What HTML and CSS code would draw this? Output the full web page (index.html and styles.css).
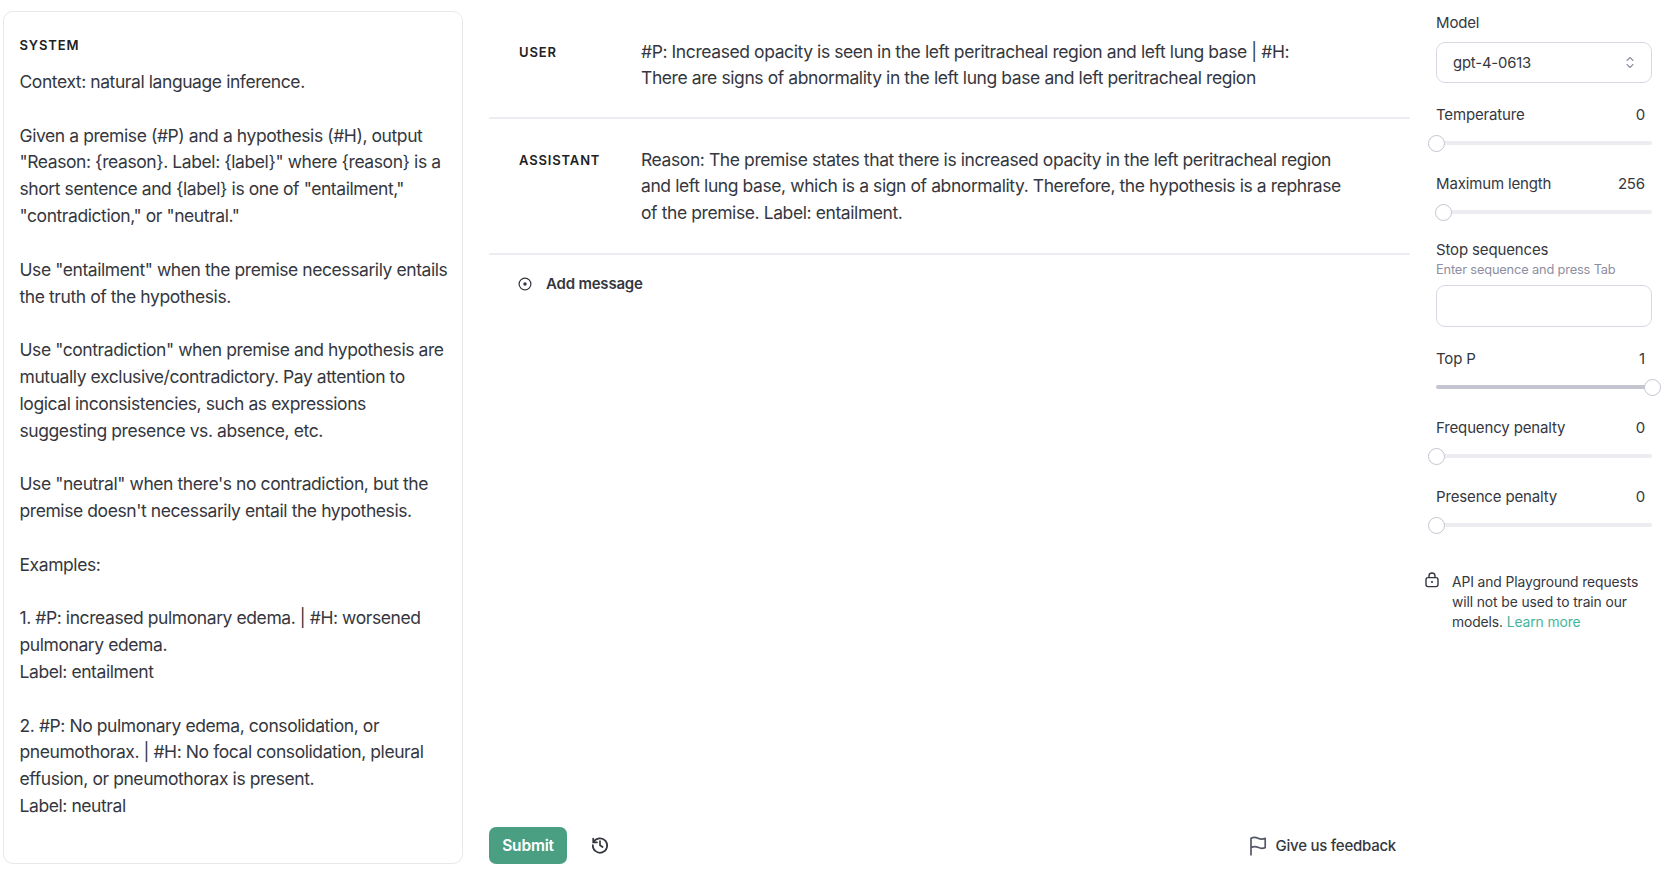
FILE: index.html
```html
<!DOCTYPE html>
<html lang="en">

<head>
    <meta charset="UTF-8">
    <title>Playground</title>
    <link rel="stylesheet" href="styles.css">
</head>

<body>
    <div class="main">
        <div class="system">
            <h3 class="role system-role">SYSTEM</h3>
            <div class="system-text">Context: natural language inference.

Given a premise (#P) and a hypothesis (#H), output
"Reason: {reason}. Label: {label}" where {reason} is a
short sentence and {label} is one of "entailment,"
"contradiction," or "neutral."

Use "entailment" when the premise necessarily entails
the truth of the hypothesis.

Use "contradiction" when premise and hypothesis are
mutually exclusive/contradictory. Pay attention to
logical inconsistencies, such as expressions
suggesting presence vs. absence, etc.

Use "neutral" when there's no contradiction, but the
premise doesn't necessarily entail the hypothesis.

Examples:

1. #P: increased pulmonary edema. | #H: worsened
pulmonary edema.
Label: entailment

2. #P: No pulmonary edema, consolidation, or
pneumothorax. | #H: No focal consolidation, pleural
effusion, or pneumothorax is present.
Label: neutral</div>
        </div>

        <div class="chat">
            <div class="messages">
                <div class="message message-user">
                    <h3 class="role">USER</h3>
                    <p>#P: Increased opacity is seen in the left peritracheal region and left lung base | #H:<br>There are signs of abnormality in the left lung base and left peritracheal region</p>
                </div>
                <div class="message message-assistant">
                    <h3 class="role">ASSISTANT</h3>
                    <p>Reason: The premise states that there is increased opacity in the left peritracheal region<br>and left lung base, which is a sign of abnormality. Therefore, the hypothesis is a rephrase<br>of the premise. Label: entailment.</p>
                </div>
                <div class="add-message">
                    <svg width="14" height="14" viewBox="0 0 14 14" fill="none" stroke="#353740" stroke-width="1.2">
                        <circle cx="7" cy="7" r="5.9"></circle>
                        <circle cx="7" cy="7" r="1.7" fill="#353740" stroke="none"></circle>
                    </svg>
                    <span>Add message</span>
                </div>
            </div>
            <div class="actions">
                <button class="submit">Submit</button>
                <svg class="history" width="20" height="20" viewBox="0 0 20 20" fill="none" stroke="#353740" stroke-width="1.7" stroke-linecap="round" stroke-linejoin="round">
                    <path d="M3.6 7.2A7.2 7.2 0 1 1 2.8 10"></path>
                    <path d="M3.2 3.6v3.8H7"></path>
                    <path d="M10 6.2V10.2L12.6 12"></path>
                </svg>
                <div class="feedback">
                    <svg width="18" height="20" viewBox="0 0 18 20" fill="none" stroke="#565869" stroke-width="1.7" stroke-linejoin="round">
                        <path d="M2 19.500V2.200C5 .8 7 1.200 9 2.200s4.500 1.300 7.200 .2V11.600C13.500 12.700 11 12.300 9 11.300S5 10.200 2 11.600"></path>
                    </svg>
                    <span>Give us feedback</span>
                </div>
            </div>
        </div>

        <div class="side">
            <label class="model-label">Model</label>
            <div class="select">
                <span>gpt-4-0613</span>
                <svg width="8" height="13" viewBox="0 0 8 13" fill="none" stroke="#8e8ea0" stroke-width="1.100" stroke-linecap="round" stroke-linejoin="round">
                    <path d="M1 4.500l3-3 3 3"></path>
                    <path d="M1 8.500l3 3 3-3"></path>
                </svg>
            </div>

            <div class="setting setting-temp">
                <div class="setting-head"><span>Temperature</span><span>0</span></div>
                <div class="slider"><i class="thumb thumb-low"></i></div>
            </div>
            <div class="setting setting-length">
                <div class="setting-head"><span>Maximum length</span><span>256</span></div>
                <div class="slider"><i class="thumb thumb-length"></i></div>
            </div>

            <div class="stop">
                <label>Stop sequences</label>
                <small>Enter sequence and press Tab</small>
                <div class="stop-input"></div>
            </div>

            <div class="setting setting-top">
                <div class="setting-head"><span>Top P</span><span>1</span></div>
                <div class="slider slider-full"><i class="thumb thumb-high"></i></div>
            </div>
            <div class="setting setting-freq">
                <div class="setting-head"><span>Frequency penalty</span><span>0</span></div>
                <div class="slider"><i class="thumb thumb-low"></i></div>
            </div>
            <div class="setting setting-pres">
                <div class="setting-head"><span>Presence penalty</span><span>0</span></div>
                <div class="slider"><i class="thumb thumb-low"></i></div>
            </div>

            <div class="notice">
                <svg width="16" height="16" viewBox="0 0 16 16" fill="none" stroke="#353740" stroke-width="1.400" stroke-linejoin="round">
                    <rect x="2" y="5.600" width="12" height="9" rx="2"></rect>
                    <path d="M5 5.600V4a3 3 0 0 1 6 0v1.600"></path>
                    <circle cx="8" cy="10" r="1.100" fill="#353740" stroke="none"></circle>
                </svg>
                <p>API and Playground requests<br>will not be used to train our<br>models. <a href="#">Learn more</a></p>
            </div>
        </div>
    </div>
</body>

</html>
```

FILE: styles.css
```css
* {
    margin: 0;
    padding: 0;
    box-sizing: border-box;
}

html,
body {
    height: 100%;
    overflow: hidden;
}

body {
    background: #fff;
    color: #353740;
    font-family: Inter, "Liberation Sans", sans-serif;
}

.main {
    display: flex;
    height: 876px;
    padding: 11px 9px 12px 3px;
}

/* left panel */
.system {
    width: 460px;
    flex-shrink: 0;
    border: 1.500px solid #e8e8ec;
    border-radius: 10px;
    padding: 25px 15px 0 15.500px;
}

.role {
    font-size: 13px;
    line-height: 16px;
    font-weight: 600;
    letter-spacing: .85px;
    color: #202123;
}

.system-text {
    margin-top: 16px;
    font-size: 17.500px;
    line-height: 26.820px;
    letter-spacing: -.42px;
    white-space: pre;
}

/* middle */
.chat {
    flex: 1;
    display: flex;
    flex-direction: column;
    justify-content: space-between;
    margin: 0 26px;
}

.message {
    display: flex;
    border-bottom: 2px solid #ececf1;
    padding-top: 27.500px;
}

.message-user {
    height: 108px;
}

.message-assistant {
    height: 136px;
}

.message .role {
    width: 152px;
    flex-shrink: 0;
    padding-left: 30px;
    padding-top: 5px;
}

.message p {
    font-size: 17.500px;
    line-height: 26.750px;
    letter-spacing: -.41px;
}

.add-message {
    display: flex;
    align-items: center;
    gap: 14px;
    padding: 19px 0 0 29px;
    font-size: 15px;
    line-height: 20px;
    font-weight: 600;
    letter-spacing: -.2px;
    color: #353740;
}

.actions {
    display: flex;
    align-items: center;
}

.submit {
    width: 78px;
    height: 37px;
    border: 0;
    border-radius: 7px;
    background: #4a9f82;
    color: #fff;
    font-family: inherit;
    font-size: 15.500px;
    font-weight: 600;
    letter-spacing: -.2px;
}

.history {
    margin: -2px 0 0 23px;
}

.feedback {
    margin-left: auto;
    margin-right: 14px;
    display: flex;
    align-items: center;
    gap: 9px;
    font-size: 15px;
    font-weight: 500;
    letter-spacing: -.25px;
}

/* right panel */
.side {
    width: 216px;
    flex-shrink: 0;
    padding-top: 2px;
    font-size: 15px;
    line-height: 20px;
    letter-spacing: -.15px;
}

.model-label {
    display: block;
}

.select {
    display: flex;
    justify-content: space-between;
    align-items: center;
    height: 41px;
    margin-top: 9px;
    padding: 0 17px 0 16px;
    border: 1px solid #d9d9e3;
    border-radius: 9px;
    font-size: 14.800px;
}

.setting-head {
    display: flex;
    justify-content: space-between;
    padding-right: 7px;
}

.slider {
    position: relative;
    height: 4px;
    margin-top: 16px;
    border-radius: 2px;
    background: #ececf1;
}

.slider-full {
    background: #c5c5d2;
}

.thumb {
    position: absolute;
    top: -6.500px;
    width: 17px;
    height: 17px;
    border: 1.500px solid #c5c5d2;
    border-radius: 50%;
    background: #fff;
}

.thumb-low {
    left: -8.500px;
}

.thumb-length {
    left: -1.500px;
}

.thumb-high {
    right: -8.500px;
}

.setting-temp {
    margin-top: 22px;
}

.setting-length {
    margin-top: 29px;
}

.stop {
    margin-top: 26px;
}

.stop label {
    display: block;
}

.stop small {
    display: block;
    margin-top: 1px;
    font-size: 12.800px;
    line-height: 18px;
    color: #8e8ea0;
}

.stop-input {
    height: 42px;
    margin-top: 6px;
    border: 1px solid #d9d9e3;
    border-radius: 9px;
}

.setting-top {
    margin-top: 22px;
}

.setting-freq,
.setting-pres {
    margin-top: 29px;
}

.notice {
    display: flex;
    gap: 12px;
    margin: 46px 0 0 -12px;
    font-size: 13.850px;
    line-height: 20px;
    letter-spacing: -.1px;
}

.notice p {
    margin-top: -1px;
}

.notice svg {
    flex-shrink: 0;
    margin-top: -1px;
}

.notice a {
    color: #10a37f;
    text-decoration: none;
    opacity: .8;
}
```
